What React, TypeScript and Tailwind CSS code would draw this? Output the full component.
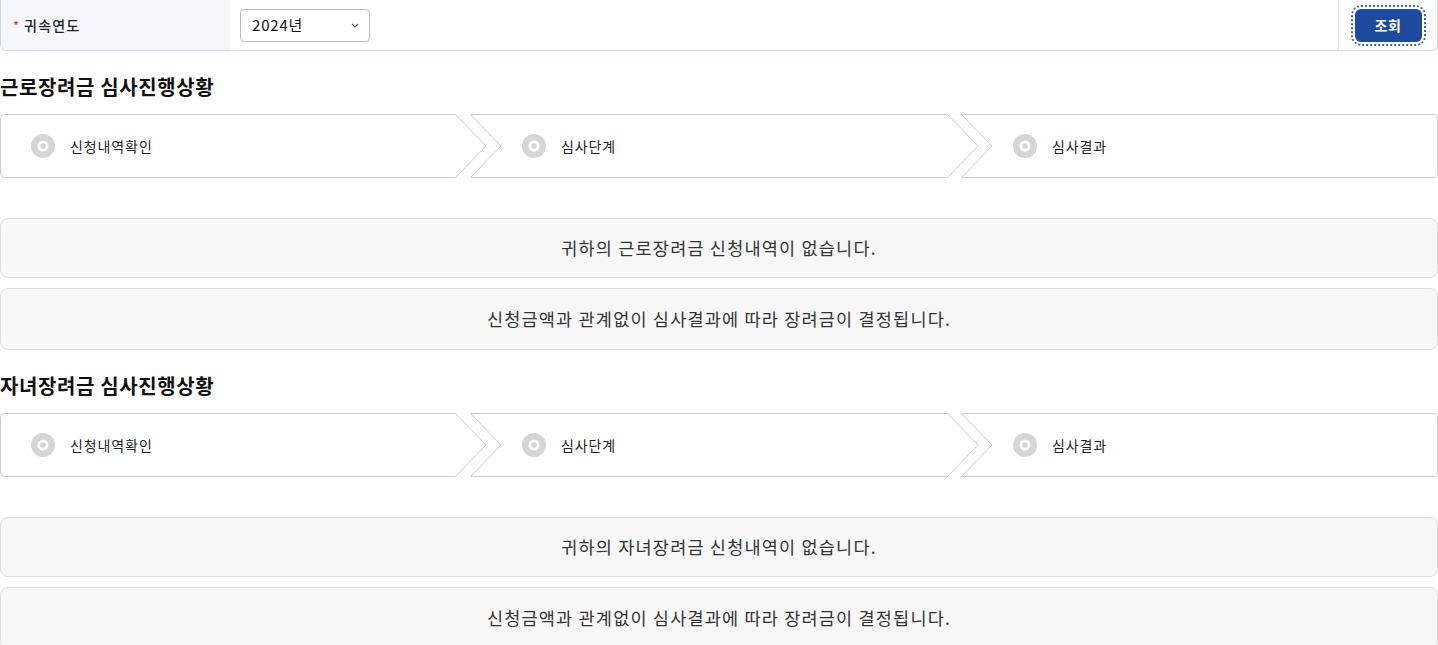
import React from "react";

const FONT = { fontFamily: '"Noto Sans CJK KR", "Noto Sans", sans-serif' };

function StepIcon() {
  return (
    <svg width="24" height="24" viewBox="0 0 24 24" className="shrink-0">
      <circle cx="12" cy="12" r="12" fill="#d6d6d6" />
      <circle cx="12" cy="12" r="5.5" fill="#ffffff" />
      <circle cx="12" cy="12" r="2.8" fill="#d6d6d6" />
    </svg>
  );
}

function StepBar() {
  return (
    <div className="flex h-[64px] w-full">
      <div className="relative h-full w-[487px] shrink-0 flex items-center pl-[31px]">
        <svg className="absolute inset-0" width="487" height="64" viewBox="0 0 487 64">
          <path d="M4.5,0.5 H455.5 L486,32 L455.5,63.5 H4.5 Q0.5,63.5 0.5,59.5 V4.5 Q0.5,0.5 4.5,0.5 Z" fill="#fff" stroke="#cccccc" />
        </svg>
        <div className="relative flex items-center gap-[15px]">
          <StepIcon />
          <span className="text-[14px] text-[#222] tracking-[0.9px]">신청내역확인</span>
        </div>
      </div>
      <div className="relative h-full w-[509px] shrink-0 -ml-[17px] flex items-center pl-[52px]">
        <svg className="absolute inset-0" width="509" height="64" viewBox="0 0 509 64">
          <path d="M0.5,0.5 H477.5 L508,32 L477.5,63.5 H0.5 L31,32 Z" fill="#fff" stroke="#cccccc" />
        </svg>
        <div className="relative flex items-center gap-[15px]">
          <StepIcon />
          <span className="text-[14px] text-[#222] tracking-[0.9px]">심사단계</span>
        </div>
      </div>
      <div className="relative h-full flex-1 -ml-[18px] flex items-center pl-[52px]">
        <svg className="absolute inset-0 h-full w-full" viewBox="0 0 477 64" preserveAspectRatio="none">
          <path d="M0.5,0.5 H472 Q476.5,0.5 476.5,4.5 V59.5 Q476.5,63.5 472,63.5 H0.5 L31,32 Z" fill="#fff" stroke="#cccccc" />
        </svg>
        <div className="relative flex items-center gap-[15px]">
          <StepIcon />
          <span className="text-[14px] text-[#222] tracking-[0.9px]">심사결과</span>
        </div>
      </div>
    </div>
  );
}

function Section({ title, name }: { title: string; name: string }) {
  return (
    <div className="flex flex-col">
      <div className="h-[63px] flex items-center">
        <h2 className="text-[20px] font-bold text-[#111] tracking-[0.6px] leading-none pt-[8px]">{title}</h2>
      </div>
      <StepBar />
      <div className="mt-[40px] flex flex-col gap-[10px]">
        <div className="h-[60px] rounded-[8px] border border-[#dddddd] bg-[#f7f7f7] flex items-center justify-center text-[17.5px] tracking-[1.2px] text-[#333]">
          귀하의 {name} 신청내역이 없습니다.
        </div>
        <div className="h-[62px] rounded-[8px] border border-[#dddddd] bg-[#f7f7f7] flex items-center justify-center text-[17.5px] tracking-[1.2px] text-[#333]">
          신청금액과 관계없이 심사결과에 따라 장려금이 결정됩니다.
        </div>
      </div>
    </div>
  );
}

export default function App() {
  return (
    <div className="w-[1438px] bg-white" style={FONT}>
      <div className="h-[51px] flex border-x border-b border-[#c8d8ef] rounded-b-[6px] overflow-hidden">
        <div className="w-[229px] bg-[#f5f7fd] flex items-center pl-[12px] gap-[5px]">
          <span className="text-[#e0245e] text-[13px] leading-none">*</span>
          <span className="text-[14px] text-[#222] font-medium tracking-[1.2px]">귀속연도</span>
        </div>
        <div className="flex-1 flex items-center pl-[10px]">
          <div className="w-[130px] h-[33px] border border-[#bbbbbb] rounded-[4px] flex items-center justify-between pl-[11px] pr-[10px]">
            <span className="text-[15px] text-[#111] tracking-[0.8px]">2024년</span>
            <svg width="8" height="5" viewBox="0 0 8 5">
              <path d="M1,1 L4,4 L7,1" fill="none" stroke="#555" strokeWidth="1.2" />
            </svg>
          </div>
        </div>
        <div className="w-[99px] border-l border-[#e3e8f0] flex items-center justify-center">
          <button className="w-[67px] h-[33px] rounded-[6px] bg-[#1f4b9e] text-white text-[14px] font-bold tracking-[0.5px] outline-2 outline-dotted outline-[#2f6be0] outline-offset-[2px]">
            조회
          </button>
        </div>
      </div>
      <Section title="근로장려금 심사진행상황" name="근로장려금" />
      <Section title="자녀장려금 심사진행상황" name="자녀장려금" />
    </div>
  );
}
